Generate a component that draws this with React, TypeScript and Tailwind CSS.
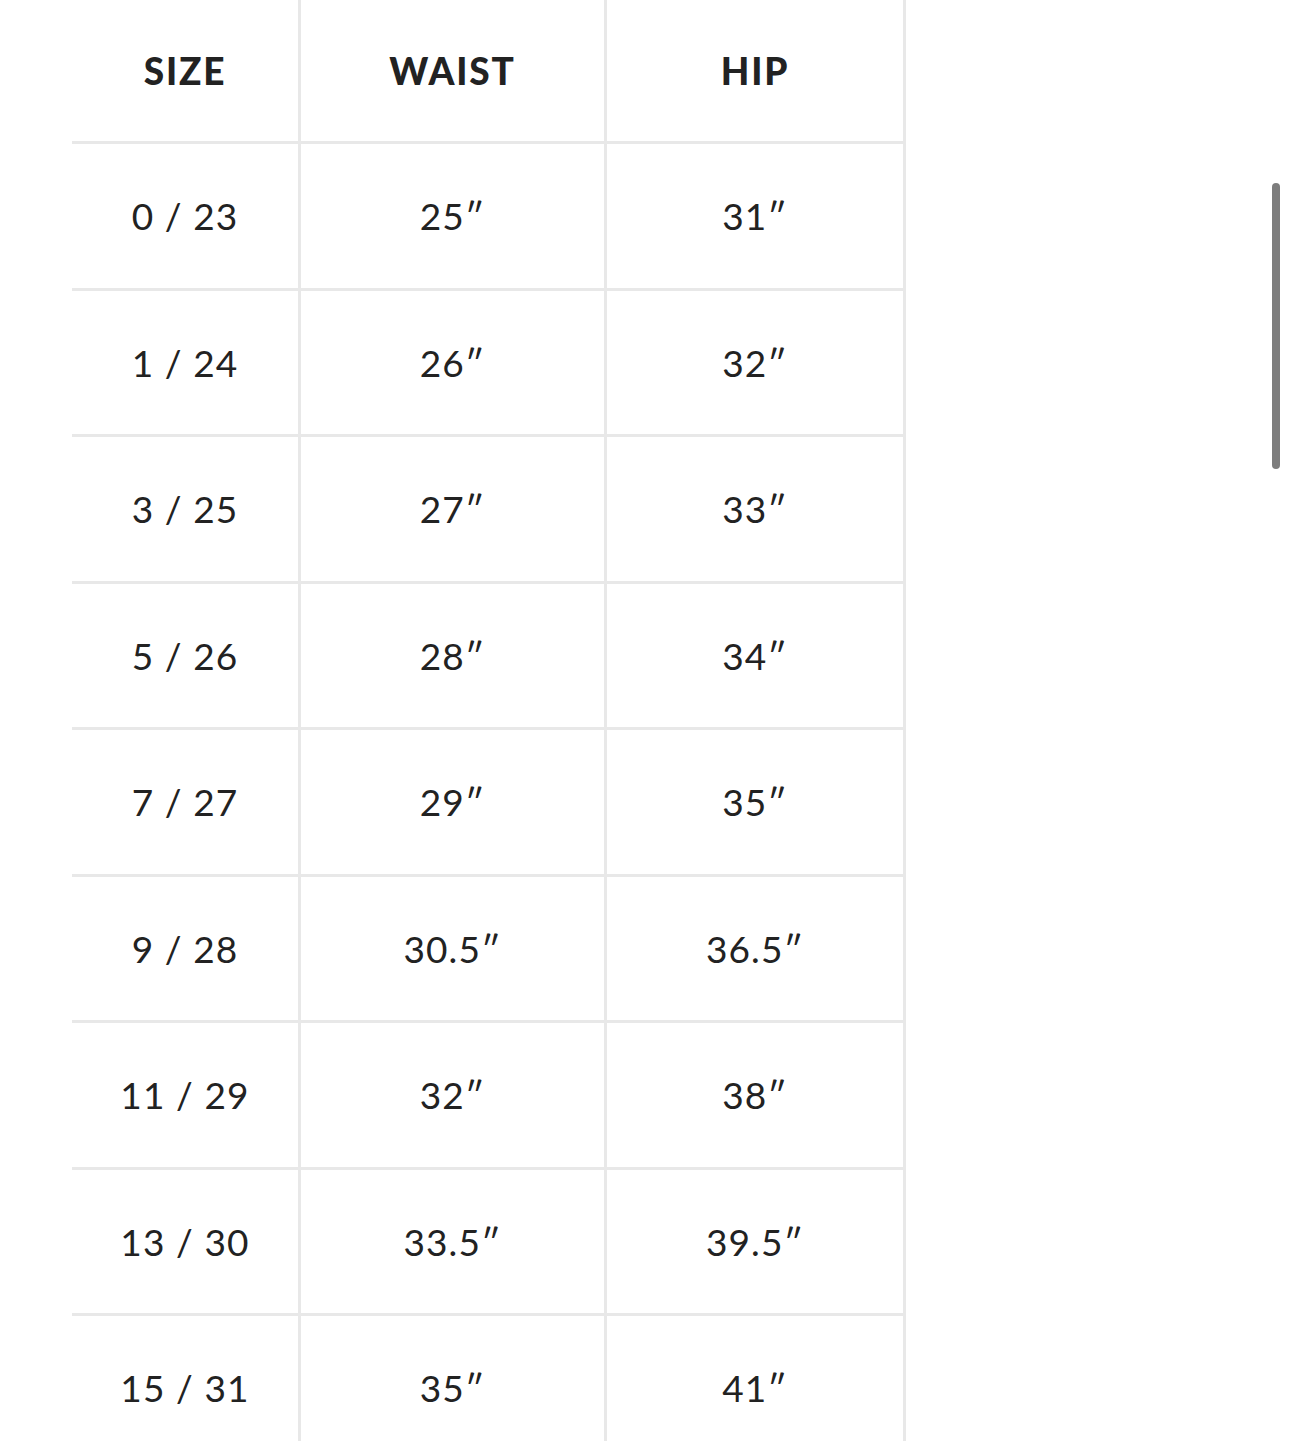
import React from 'react'

const rows = [
  ['0 / 23', '25″', '31″'],
  ['1 / 24', '26″', '32″'],
  ['3 / 25', '27″', '33″'],
  ['5 / 26', '28″', '34″'],
  ['7 / 27', '29″', '35″'],
  ['9 / 28', '30.5″', '36.5″'],
  ['11 / 29', '32″', '38″'],
  ['13 / 30', '33.5″', '39.5″'],
  ['15 / 31', '35″', '41″'],
]

const cell = 'flex items-center justify-center border-r-[3px] border-b-[3px] border-[#e8e8e8]'

export default function App() {
  return (
    <div className="relative h-[1441px] w-[1290px] overflow-hidden bg-white text-[#222]" style={{ fontFamily: 'Lato, "Open Sans", sans-serif' }}>
      <div className="ml-[72px] grid w-[834px] grid-cols-[229px_306px_299px]">
        {['SIZE', 'WAIST', 'HIP'].map(h => (
          <div key={h} className={`${cell} h-[144px] text-[37px] font-black tracking-[0.05em]`}>
            {h}
          </div>
        ))}
        {rows.map(r =>
          r.map((v, i) => (
            <div key={r[0] + i} className={`${cell} h-[146.5px] text-[37px] tracking-[0.03em]`}>
              {v}
            </div>
          ))
        )}
      </div>

      {/* scrollbar */}
      <div className="absolute left-[1272px] top-[183px] h-[286px] w-[8px] rounded-full bg-[#7d7d7d]" />
    </div>
  )
}
